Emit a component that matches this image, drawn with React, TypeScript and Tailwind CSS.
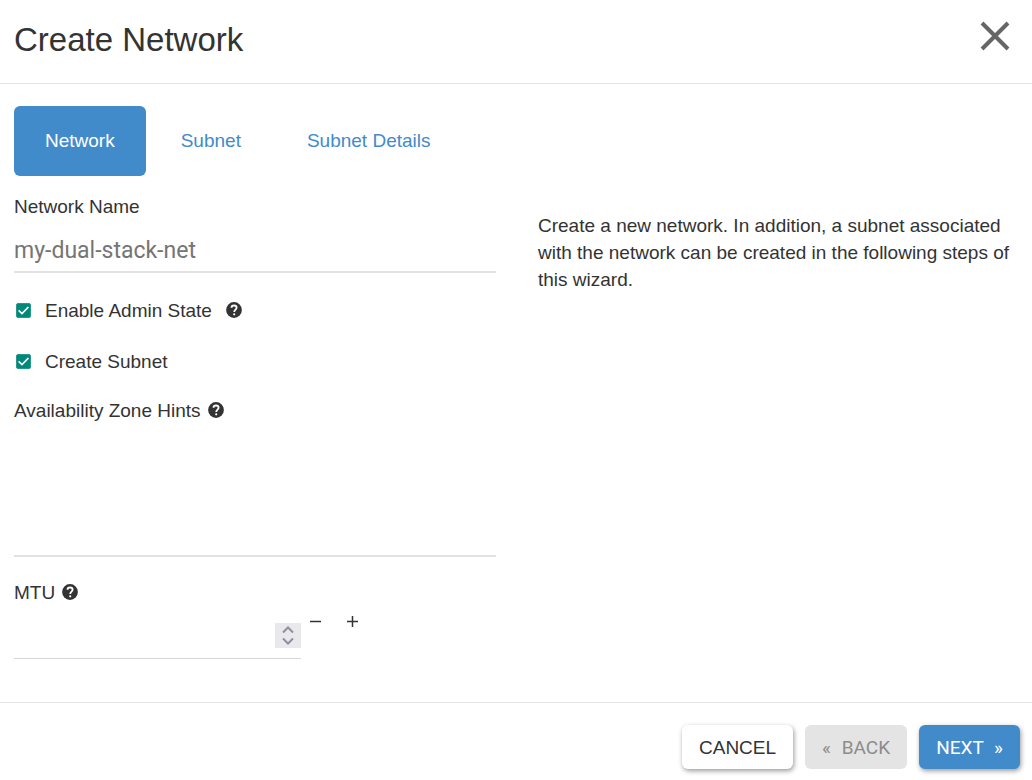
import { useState } from 'react';
import clsx from 'clsx';

const steps = [
  { id: 'network', name: 'Network' },
  { id: 'subnet', name: 'Subnet' },
  { id: 'details', name: 'Subnet Details' },
];

function Help({ label }: { label: string }) {
  return (
    <button type="button" aria-label={`Help: ${label}`} className="shrink-0 pb-0.5">
      <svg viewBox="0 0 16 16" className="h-4 w-4" fill="none" aria-hidden="true">
        <circle cx="8" cy="8" r="7.9" fill="#333" />
        <path
          d="M5.500 5.800C5.500 4.300 6.500 3.500 8 3.500S10.600 4.400 10.600 5.700C10.600 7.600 8.200 7.600 8.200 10"
          stroke="white"
          strokeWidth="1.800"
        />
        <circle cx="8.200" cy="12.300" r="1.100" fill="white" />
      </svg>
    </button>
  );
}

function Checkbox({ id, label }: { id: string; label: string }) {
  return (
    <div className="flex items-center gap-[14px] pl-0.5">
      <span className="grid">
        <input
          id={id}
          type="checkbox"
          defaultChecked
          className="peer col-start-1 row-start-1 h-[15px] w-[15px] appearance-none rounded-[2px] border border-gray-500 checked:border-[#26998a] checked:bg-[#00897b]"
        />
        <svg
          viewBox="0 0 15 15"
          className="pointer-events-none invisible col-start-1 row-start-1 h-[15px] w-[15px] peer-checked:visible"
          fill="none"
          stroke="white"
          strokeWidth="1.700"
          aria-hidden="true"
        >
          <path d="M2.6 7.4 6 10.600 12.400 4" />
        </svg>
      </span>
      <label htmlFor={id}>{label}</label>
    </div>
  );
}

export default function App() {
  const [active, setActive] = useState('network');
  const [mtu, setMtu] = useState('');

  const step = (delta: number) => setMtu(String(Math.max(0, Number(mtu) + delta)));

  return (
    <form
      className="bg-white font-['Liberation_Sans',Arial,sans-serif] text-[19px] leading-[27px] text-[#333]"
      onSubmit={(e) => e.preventDefault()}
    >
      <header className="flex items-start justify-between border-b border-[#e5e5e5] px-[14px] pt-5 pb-6">
        <h1 className="text-[33px] leading-[39px]">Create Network</h1>
        <button type="button" aria-label="Close" className="mr-2">
          <svg viewBox="0 0 30 32" className="h-8 w-[30px]" fill="none" stroke="#666" strokeWidth="4" aria-hidden="true">
            <path d="M2 3 28 29M28 3 2 29" />
          </svg>
        </button>
      </header>

      <nav className="flex gap-1 px-[14px] pt-[22px]">
        {steps.map((item) => (
          <a
            key={item.id}
            href={`#${item.id}`}
            onClick={() => setActive(item.id)}
            className={clsx(
              active === item.id ? 'bg-[#428bca] text-white' : 'text-[#428bca]',
              'rounded-[6px] px-[31px] py-[21px] leading-7'
            )}
          >
            {item.name}
          </a>
        ))}
      </nav>

      <div className="grid grid-cols-2 px-[14px] pb-[43px]">
        <div className="pt-[17px] pr-5">
          <label htmlFor="name" className="block">
            Network Name
          </label>
          <input
            id="name"
            type="text"
            placeholder="my-dual-stack-net"
            className="mt-[7px] block h-[46px] w-full border-b-2 border-[#e2e2e2] pt-0.5 font-[Roboto,sans-serif] text-[23px] outline-none placeholder:text-[#757575]"
          />

          <div className="mt-6 flex items-center gap-[14px]">
            <Checkbox id="admin-state" label="Enable Admin State" />
            <Help label="Enable Admin State" />
          </div>
          <div className="mt-6">
            <Checkbox id="create-subnet" label="Create Subnet" />
          </div>

          <div className="mt-[22px] flex items-center gap-[7px]">
            <label htmlFor="zones">Availability Zone Hints</label>
            <Help label="Availability Zone Hints" />
          </div>
          <select
            id="zones"
            multiple
            className="mt-[7px] block h-[126px] w-full border-b-2 border-[#e2e2e2] outline-none"
          />

          <div className="mt-[22px] flex items-center gap-[7px]">
            <label htmlFor="mtu">MTU</label>
            <Help label="MTU" />
          </div>
          <div className="flex items-start">
            <div className="mt-[7px] flex h-[46px] w-[287px] items-center border-b border-[#d8d8d8]">
              <input
                id="mtu"
                type="number"
                value={mtu}
                onChange={(e) => setMtu(e.target.value)}
                className="min-w-0 flex-1 appearance-none font-[Roboto,sans-serif] text-[23px] outline-none [&::-webkit-inner-spin-button]:appearance-none"
              />
              <svg
                viewBox="0 0 26 25"
                className="h-[25px] w-[26px] bg-[#e9e9ed]"
                fill="none"
                stroke="#8f8f9d"
                strokeWidth="2"
                aria-hidden="true"
              >
                <path d="M8 9.500 13 4.500 18 9.500M8 15.500 13 20.500 18 15.500" />
              </svg>
            </div>
            <button type="button" aria-label="Decrease MTU" onClick={() => step(-1)} className="ml-2 pt-[9px]">
              <svg viewBox="0 0 13 13" className="h-[13px] w-[13px]" stroke="#333" strokeWidth="1.500" aria-hidden="true">
                <path d="M1 6.500H12" />
              </svg>
            </button>
            <button type="button" aria-label="Increase MTU" onClick={() => step(1)} className="ml-6 pt-[9px]">
              <svg viewBox="0 0 13 13" className="h-[13px] w-[13px]" stroke="#333" strokeWidth="1.500" aria-hidden="true">
                <path d="M1 6.500H12M6.500 1V12" />
              </svg>
            </button>
          </div>
        </div>

        <p className="pt-9 pl-[22px]">
          Create a new network. In addition, a subnet associated with the network can be created in the
          following steps of this wizard.
        </p>
      </div>

      <footer className="flex justify-end gap-3 border-t border-[#e5e5e5] px-3 pt-[22px] pb-3">
        <button type="button" className="h-11 rounded-[6px] bg-white px-[17px] shadow-[1px_2px_5px_rgba(0,0,0,0.4)]">
          CANCEL
        </button>
        <button
          type="button"
          disabled
          className="h-11 rounded-[6px] bg-[#e4e4e4] px-[17px] font-[Roboto,sans-serif] text-[#8c8c8c]"
        >
          <span className="mr-[6px]">«</span> BACK
        </button>
        <button
          type="submit"
          className="h-11 rounded-[6px] bg-[#428bca] px-[17px] font-[Roboto,sans-serif] text-white shadow-[1px_2px_5px_rgba(0,0,0,0.4)]"
        >
          NEXT <span className="ml-[6px]">»</span>
        </button>
      </footer>
    </form>
  );
}
